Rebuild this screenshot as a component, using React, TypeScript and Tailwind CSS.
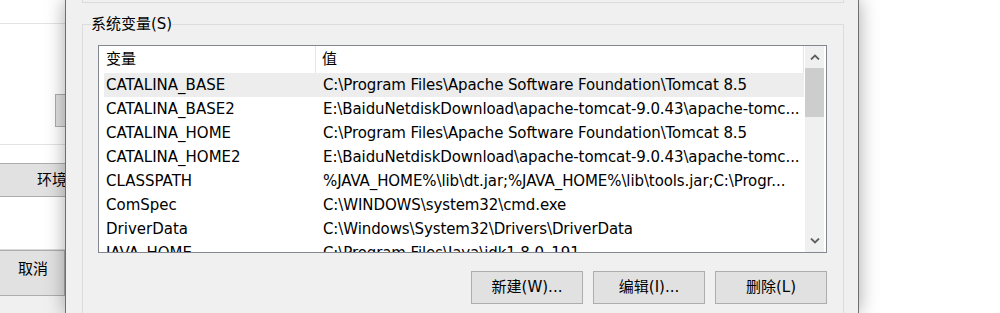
import React from 'react';

type EnvVar = {
    name: string;
    value: string;
};

const systemVars: EnvVar[] = [
    { name: 'CATALINA_BASE', value: 'C:\\Program Files\\Apache Software Foundation\\Tomcat 8.5' },
    { name: 'CATALINA_BASE2', value: 'E:\\BaiduNetdiskDownload\\apache-tomcat-9.0.43\\apache-tomc...' },
    { name: 'CATALINA_HOME', value: 'C:\\Program Files\\Apache Software Foundation\\Tomcat 8.5' },
    { name: 'CATALINA_HOME2', value: 'E:\\BaiduNetdiskDownload\\apache-tomcat-9.0.43\\apache-tomc...' },
    { name: 'CLASSPATH', value: '%JAVA_HOME%\\lib\\dt.jar;%JAVA_HOME%\\lib\\tools.jar;C:\\Progr...' },
    { name: 'ComSpec', value: 'C:\\WINDOWS\\system32\\cmd.exe' },
    { name: 'DriverData', value: 'C:\\Windows\\System32\\Drivers\\DriverData' },
    { name: 'JAVA_HOME', value: 'C:\\Program Files\\Java\\jdk1.8.0_191' },
];

const font = "font-['DejaVu_Sans','Noto_Sans_CJK_SC',sans-serif]";

function Chevron({ up }: { up?: boolean }) {
    return (
        <svg width="10" height="6" viewBox="0 0 10 6" className={up ? '' : 'rotate-180'}>
            <path d="M1 5.5 L5 1.5 L9 5.5" fill="none" stroke="#606060" strokeWidth="1.8" />
        </svg>
    );
}

function BackgroundWindow() {
    return (
        <div className="w-[65px] shrink-0 overflow-hidden flex flex-col bg-white text-[15px] text-black">
            <div className="h-[24px] border-b border-[#e3e3e3]" />
            <div className="h-[121px] border-b border-[#e3e3e3] pt-[70px]">
                <div className="ml-[55px] w-[40px] h-[33px] border border-[#adadad] bg-[#e1e1e1]" />
            </div>
            <div className="h-[18px]" />
            <div className="h-[34px] -mx-[10px] border-y border-[#adadad] bg-[#e1e1e1] flex items-center pl-[47px] whitespace-nowrap">
                环境
            </div>
            <div className="h-[53px] border-b border-[#d9d9d9]" />
            <div className="h-[46px] -ml-[10px] border border-[#adadad] bg-[#e1e1e1] flex items-center pl-[27px] pb-[8px]">
                取消
            </div>
            <div className="flex-1 bg-[#f0f0f0]" />
        </div>
    );
}

export default function App() {
    return (
        <div className={`w-[1000px] h-[313px] overflow-hidden flex bg-white ${font}`}>
            <BackgroundWindow />

            <div className="w-[794px] shrink-0 h-full border-x border-[#6f6f6f] bg-[#f0f0f0] shadow-[0_0_18px_rgba(0,0,0,0.35)] pl-[16px] pr-[14px] text-[15px] text-black">
                <div className="h-[3px] border-x border-b border-[#dcdcdc]" />

                <fieldset className="mt-[11px] border border-[#dcdcdc] h-[400px] pl-[15px] pr-[16px]">
                    <legend className="ml-[-7px] px-0 leading-[20px]">系统变量(S)</legend>

                    <div className="mt-[11px] h-[208px] border border-[#828790] bg-white flex">
                        <div className="flex-1 min-w-0 pl-[5px] overflow-hidden">
                            <div className="h-[27px] flex items-center">
                                <div className="w-[212px] h-full flex items-center pl-[2px] border-r border-[#e5e5e5]">变量</div>
                                <div className="flex-1 h-full flex items-center pl-[6px] border-r border-[#e5e5e5]">值</div>
                            </div>
                            {systemVars.map((v, i) => (
                                <div
                                    key={v.name}
                                    className={`h-[24px] flex items-center whitespace-nowrap ${i === 0 ? 'bg-[#ededed]' : ''}`}
                                >
                                    <div className="w-[212px] pl-[2px] overflow-hidden">{v.name}</div>
                                    <div className="flex-1 pl-[7px] overflow-hidden tracking-[-0.1px]">{v.value}</div>
                                </div>
                            ))}
                        </div>

                        <div className="w-[19px] shrink-0 ml-[1px] bg-[#f0f0f0] flex flex-col items-center">
                            <div className="h-[22px] flex items-center justify-center">
                                <Chevron up />
                            </div>
                            <div className="w-full h-[49px] bg-[#cdcdcd]" />
                            <div className="flex-1" />
                            <div className="h-[22px] flex items-center justify-center">
                                <Chevron />
                            </div>
                        </div>
                        <div className="w-[2px] shrink-0" />
                    </div>

                    <div className="mt-[18px] flex justify-end gap-[10px]">
                        <button className="w-[112px] h-[33px] border border-[#adadad] bg-[#e1e1e1]">新建(W)...</button>
                        <button className="w-[112px] h-[33px] border border-[#adadad] bg-[#e1e1e1]">编辑(I)...</button>
                        <button className="w-[112px] h-[33px] border border-[#adadad] bg-[#e1e1e1]">删除(L)</button>
                    </div>
                </fieldset>
            </div>

            <div className="flex-1" />
        </div>
    );
}
